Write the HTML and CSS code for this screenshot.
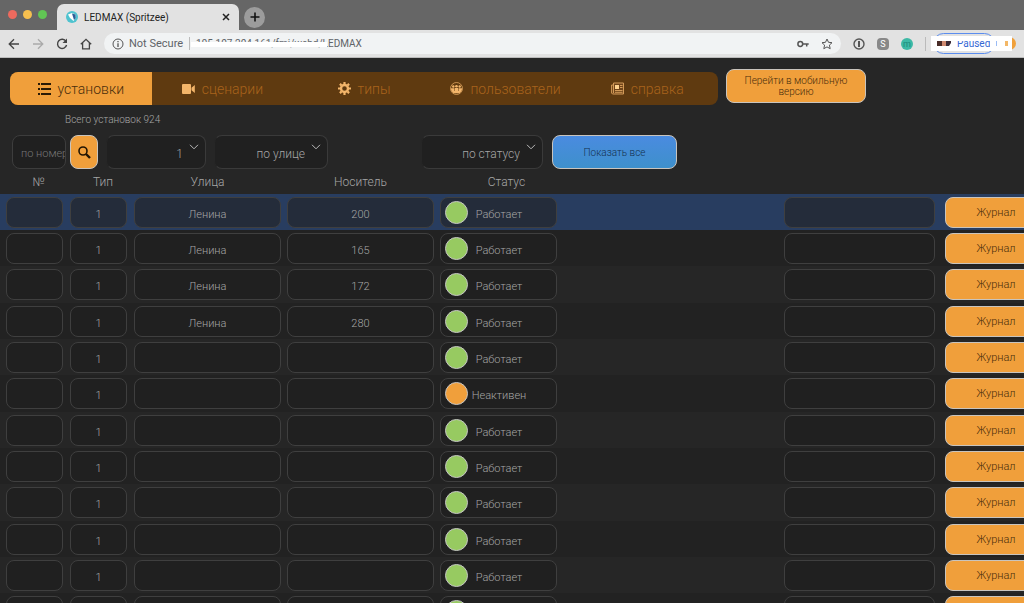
FILE: index.html
```
<!DOCTYPE html>
<html lang="ru">
<head>
    <meta charset="utf-8">
    <title>LEDMAX (Spritzee)</title>
    <link rel="stylesheet" href="styles.css">
</head>
<body>
    <!-- Browser window -->
    <header class="browser">
        <div class="tabs">
            <span class="dot red"></span>
            <span class="dot yellow"></span>
            <span class="dot green"></span>
            <div class="tab">
                <svg width="12" height="12" viewBox="0 0 12 12"><circle cx="6" cy="6" r="6" fill="#4fc3cf"/><path d="M2 3.500L6 2l3.500 1.500.5 3L7.500 10 4 7z" fill="#fff"/><path d="M6 2.500l3.500 1 .3 3.500L8 9z" fill="#2c5f98"/></svg>
                <span class="tab-title">LEDMAX (Spritzee)</span>
                <button class="tab-close" aria-label="Close"><svg width="8" height="8" viewBox="0 0 8 8"><path d="M1 1l6 6M7 1L1 7" stroke="#222" stroke-width="1.5"/></svg></button>
            </div>
            <button class="new-tab" aria-label="New tab"><svg width="10" height="10" viewBox="0 0 10 10"><path d="M5 0.500v9M0.500 5h9" stroke="#111" stroke-width="1.600"/></svg></button>
        </div>
        <div class="toolbar">
            <button class="nav-btn" aria-label="Back"><svg width="12" height="12" viewBox="0 0 12 12" fill="none" stroke="#444" stroke-width="1.300"><path d="M11 6H1.500M6 1.200L1.200 6 6 10.800"/></svg></button>
            <button class="nav-btn" aria-label="Forward"><svg width="12" height="12" viewBox="0 0 12 12" fill="none" stroke="#aaa" stroke-width="1.300"><path d="M1 6h9.500M6 1.200L10.800 6 6 10.800"/></svg></button>
            <button class="nav-btn" aria-label="Reload"><svg width="12" height="12" viewBox="0 0 12 12" fill="none" stroke="#444" stroke-width="1.400"><path d="M10 3.300A4.600 4.600 0 1 0 10.600 7"/><path d="M11 0.500v4.500H6.500z" fill="#444" stroke="none"/></svg></button>
            <button class="nav-btn" aria-label="Home"><svg width="12" height="12" viewBox="0 0 12 12" fill="none" stroke="#444" stroke-width="1.300"><path d="M0.800 6.300L6 1.300l5.200 5M2.600 5v5.800h6.800V5"/></svg></button>
            <div class="address">
                <svg width="12" height="12" viewBox="0 0 12 12" fill="none" stroke="#555"><circle cx="6" cy="6" r="5"/><path d="M6 5.200V9M6 3v1.200" stroke-width="1.300"/></svg>
                <span class="secure">Not Secure</span>
                <span class="url">195.107.204.161/fmi/webd/LEDMAX<span class="url-mask"></span></span>
                <svg class="key" width="12" height="8" viewBox="0 0 12 8" fill="none" stroke="#555" stroke-width="1.500"><circle cx="3.300" cy="4" r="2.400"/><path d="M5.700 4h6M9.700 4v2.600"/></svg>
                <svg width="12" height="12" viewBox="0 0 12 12" fill="none" stroke="#555"><path d="M6 1l1.500 3.300 3.500.4-2.600 2.400.8 3.600L6 8.900l-3.200 1.800.8-3.600L1 4.700l3.500-.4z"/></svg>
            </div>
            <svg width="12" height="12" viewBox="0 0 12 12"><circle cx="6" cy="6" r="5" fill="none" stroke="#555" stroke-width="1.400"/><path d="M6 3v6" stroke="#555" stroke-width="2"/></svg>
            <span class="ext skype">S</span>
            <span class="ext mint">m</span>
            <span class="divider"></span>
            <div class="profile">
                <span class="pill"></span>
                <span class="avatar"></span>
                <div class="profile-mask">
                    <svg width="14" height="5" viewBox="0 0 14 5"><path d="M0 0h5v5H0z" fill="#4a2c28"/><path d="M5 0h4v5H5z" fill="#d08a70"/><path d="M9 0h5v2l-2 3H9z" fill="#3a2a35"/></svg>
                    <span class="paused">Paused</span>
                    <svg width="12" height="5" viewBox="0 0 12 5"><path d="M0 0h1v5H0z" fill="#9bbcf5"/><path d="M9 0h3v5H9z" fill="#f3b766"/></svg>
                </div>
            </div>
        </div>
    </header>

    <main>
        <!-- Menu -->
        <div class="top">
            <nav class="menu">
                <a href="#" class="active"><svg width="13" height="12" viewBox="0 0 13 12" fill="#2a1a05"><path d="M0 0h2v2H0zM3 0h10v2H3zM0 5h2v2H0zM3 5h10v2H3zM0 10h2v2H0zM3 10h10v2H3z"/></svg>установки</a>
                <a href="#"><svg width="13" height="10" viewBox="0 0 13 10" fill="#f3b56a"><rect width="9" height="10" rx="1"/><path d="M9.500 3.800L12.800 1v8L9.500 6.200z"/></svg>сценарии</a>
                <a href="#"><svg width="13" height="13" viewBox="0 0 13 13" fill="none" stroke="#f3b56a"><circle cx="6.500" cy="6.500" r="3.500" stroke-width="2.400"/><path d="M6.500 0v2M6.500 11v2M0 6.500h2M11 6.500h2M1.900 1.900l1.500 1.500M9.600 9.600l1.500 1.500M1.900 11.100l1.500-1.500M9.600 3.400l1.500-1.500" stroke-width="2.200"/></svg>типы</a>
                <a href="#"><svg width="13" height="13" viewBox="0 0 13 13"><circle cx="6.500" cy="6.500" r="6" fill="none" stroke="#f3b56a" stroke-width=".7"/><g fill="#f3b56a"><circle cx="3.300" cy="4.500" r="1.200"/><circle cx="6.500" cy="4.200" r="1.300"/><circle cx="9.700" cy="4.500" r="1.200"/><path d="M.8 6.200h3.700V9h.5V6h3v3h.5V6.200h3.700a6 6 0 0 1-2.700 5H3.500a6 6 0 0 1-2.700-5z"/></g></svg>пользователи</a>
                <a href="#"><svg width="13" height="13" viewBox="0 0 13 13"><path d="M2.500 1h10v11H1.500L.6 11V3h1.900z" fill="#70451a" stroke="#d39a58"/><path d="M2.500 3v8" stroke="#d39a58"/><path d="M4 3h4v4H4z" fill="#ffd28f"/><path d="M9 3.500h2.500M9 5.500h2.500M4 8.500h7.500M4 10.300h7.500" stroke="#d39a58"/></svg>справка</a>
            </nav>
            <button class="btn mobile">Перейти в мобильную версию</button>
        </div>

        <p class="total">Всего установок 924</p>

        <!-- Filters -->
        <form class="filters">
            <input type="text" class="number" placeholder="по номеру" aria-label="по номеру">
            <button type="button" class="btn search" aria-label="Поиск"><svg width="13" height="13" viewBox="0 0 13 13" fill="none" stroke="#221503"><circle cx="5" cy="5" r="4" stroke-width="1.600"/><path d="M8 8l4 4" stroke-width="2.400"/></svg></button>
            <div class="select type"><select aria-label="Тип"><option>1</option></select><svg width="10" height="6" viewBox="0 0 10 6" fill="none" stroke="#bbb"><path d="M1 .8l4 4 4-4"/></svg></div>
            <div class="select street"><select aria-label="Улица"><option>по улице</option></select><svg width="10" height="6" viewBox="0 0 10 6" fill="none" stroke="#bbb"><path d="M1 .8l4 4 4-4"/></svg></div>
            <div class="select status"><select aria-label="Статус"><option>по статусу</option></select><svg width="10" height="6" viewBox="0 0 10 6" fill="none" stroke="#bbb"><path d="M1 .8l4 4 4-4"/></svg></div>
            <button type="button" class="btn show-all">Показать все</button>
        </form>

        <!-- List -->
        <table>
            <colgroup>
                <col class="c-num"><col class="c-type"><col class="c-street"><col class="c-carrier"><col class="c-status"><col><col class="c-note"><col class="c-log">
            </colgroup>
            <thead>
                <tr><th>№</th><th>Тип</th><th>Улица</th><th>Носитель</th><th>Статус</th><th></th><th></th><th></th></tr>
            </thead>
            <tbody id="rows"></tbody>
        </table>
    </main>

    <script>
        const rows = [
            ["Ленина", "200", true],
            ["Ленина", "165", true],
            ["Ленина", "172", true],
            ["Ленина", "280", true],
            ["", "", true],
            ["", "", false],
            ["", "", true],
            ["", "", true],
            ["", "", true],
            ["", "", true],
            ["", "", true],
            ["", "", true]
        ];

        const tbody = document.getElementById("rows");
        for (const [street, carrier, works] of rows) {
            tbody.innerHTML += `
                <tr>
                    <td><div class="field"></div></td>
                    <td><div class="field">1</div></td>
                    <td><div class="field">${street}</div></td>
                    <td><div class="field">${carrier}</div></td>
                    <td><div class="field state"><span class="lamp ${works ? "on" : "off"}"></span><span class="state-text">${works ? "Работает" : "Неактивен"}</span></div></td>
                    <td></td>
                    <td><div class="field"></div></td>
                    <td><button class="btn log">Журнал</button></td>
                </tr>
            `;
        }
    </script>
</body>
</html>
```
FILE: styles.css
```
* {
    box-sizing: border-box;
}

html, body {
    height: 100%;
}

body {
    margin: 0;
    overflow: hidden;
    background-color: #262626;
    color: #a6a6a6;
    font-family: Roboto, "Liberation Sans", sans-serif;
    font-weight: 300;
    font-size: 12px;
}

button, input, select {
    font: inherit;
}

button {
    border: none;
    padding: 0;
    background: none;
    cursor: pointer;
}

svg {
    display: block;
    flex: none;
}

/* browser */
.browser {
    font-weight: 400;
    color: #222;
}

.tabs {
    display: flex;
    align-items: center;
    height: 30px;
    padding-left: 8px;
    background-color: #666;
}

.dot {
    width: 9px;
    height: 9px;
    margin: 0 6px 2px 0;
    border-radius: 50%;
}

.red { background-color: #ed6a5e; }
.yellow { background-color: #f5bf4f; }
.green { background-color: #61c554; }

.tab {
    display: flex;
    align-items: center;
    align-self: flex-end;
    width: 182px;
    height: 26px;
    margin-left: 4px;
    padding: 0 9px;
    border-radius: 7px 7px 0 0;
    background-color: #e2e2e2;
    font-size: 10px;
}

.tab-title {
    flex: 1;
    margin-left: 6px;
}

.new-tab {
    display: flex;
    align-items: center;
    justify-content: center;
    width: 21px;
    height: 21px;
    margin: 4px 0 0 5px;
    border-radius: 50%;
    background-color: #9c9c9c;
}

.toolbar {
    display: flex;
    align-items: center;
    gap: 12px;
    height: 28px;
    padding: 0 8px;
    background-color: #e2e2e2;
    border-bottom: 1px solid #bbb;
}

.address {
    display: flex;
    align-items: center;
    flex: 1;
    height: 21px;
    padding: 0 8px;
    border-radius: 11px;
    background-color: #f1f3f4;
    font-size: 11px;
    color: #5f6368;
}

.secure {
    margin-left: 5px;
    padding-right: 6px;
    border-right: 1px solid #bbb;
}

.url {
    position: relative;
    flex: 1;
    margin-left: 6px;
    font-size: 10px;
}

.url-mask {
    position: absolute;
    top: 4px;
    left: -5px;
    width: 136px;
    height: 5px;
    background-color: #fff;
}

.key {
    margin-right: 12px;
}

.ext {
    width: 12px;
    height: 12px;
    border-radius: 4px;
    color: #fff;
    font-size: 9px;
    line-height: 12px;
    text-align: center;
}

.skype { background-color: #888; }

.mint {
    border-radius: 50%;
    background-color: #3db9a5;
    color: #1d8a7c;
}

.divider {
    width: 1px;
    height: 14px;
    background-color: #bbb;
}

.profile {
    position: relative;
    display: flex;
    align-items: center;
    width: 85px;
    height: 21px;
    margin-left: -7px;
    padding-left: 2px;
}

.pill {
    width: 62px;
    height: 21px;
    border: 1px solid #5b8def;
    border-radius: 11px;
}

.avatar {
    width: 13px;
    height: 13px;
    margin-left: auto;
    border-radius: 50%;
    background-color: #f0a03a;
}

.profile-mask {
    position: absolute;
    top: 3px;
    left: 0;
    display: flex;
    align-items: center;
    width: 81px;
    height: 15px;
    padding-left: 6px;
    background-color: #fff;
}

.paused {
    height: 6px;
    margin: 0 6px;
    overflow: hidden;
    color: #3568d4;
    font-size: 10px;
    line-height: 6px;
}

/* menu */
.top {
    display: flex;
    align-items: flex-start;
    gap: 8px;
    padding: 11px 10px 0;
}

.menu {
    display: grid;
    grid-template-columns: repeat(5, 1fr);
    flex: 0 1 708px;
    margin-top: 3px;
    border-radius: 8px;
    overflow: hidden;
    background-color: #5f3a10;
}

.menu a {
    display: flex;
    align-items: center;
    justify-content: center;
    gap: 7px;
    height: 33px;
    color: #a8631c;
    font-size: 14px;
    text-decoration: none;
}

.menu .active {
    background-color: #f09f3b;
    color: #4a2e0c;
}

.btn {
    border: 1px solid #c9c4bd;
    border-radius: 8px;
    background-color: #f09f3b;
    color: #4a2e0c;
    font-size: 11px;
}

.mobile {
    width: 140px;
    height: 34px;
    padding: 0 14px;
    font-size: 10px;
    line-height: 11px;
}

.total {
    margin: 8px 0 0 65px;
    font-size: 10px;
    line-height: 14px;
}

/* filters */
.filters {
    display: flex;
    margin: 8px 0 0 12px;
}

.number {
    width: 54px;
    height: 34px;
    padding: 3px 0 0 8px;
    border: 1px solid #3d3d3d;
    border-radius: 8px;
    background-color: #202020;
    color: #a6a6a6;
    font-size: 11px;
}

.number::placeholder {
    color: #777;
}

.search {
    display: flex;
    align-items: center;
    justify-content: center;
    width: 28px;
    height: 34px;
    margin-left: 4px;
}

.select {
    position: relative;
    height: 34px;
    margin-left: 8px;
}

.select select {
    width: 100%;
    height: 34px;
    padding: 3px 22px 0 0;
    appearance: none;
    border: 1px solid #3a3a3a;
    border-left-color: #262626;
    border-radius: 8px;
    background-color: #202020;
    color: #a6a6a6;
    font-size: 12px;
    text-align: right;
    text-align-last: right;
}

.select svg {
    position: absolute;
    top: 9px;
    right: 7px;
}

.type { width: 100px; }
.street { width: 114px; }

.status {
    width: 122px;
    margin-left: 93px;
}

.show-all {
    width: 125px;
    height: 34px;
    margin-left: 9px;
    background: linear-gradient(#4a8be0, #3e90cb);
    color: #14314f;
    font-size: 10px;
}

/* list */
table {
    width: 100%;
    min-width: 1050px;
    table-layout: fixed;
    border-collapse: collapse;
}

.c-num { width: 67px; }
.c-type { width: 64px; }
.c-street { width: 153px; }
.c-carrier { width: 153px; }
.c-status { width: 123px; }
.c-note { width: 158px; }
.c-log { width: 111px; }

th {
    height: 25px;
    padding: 0;
    font-size: 12px;
    font-weight: 300;
}

th:first-child {
    padding-left: 10px;
}

th:nth-child(2) {
    padding-left: 8px;
}

th:nth-child(5) {
    padding-left: 16px;
}

td {
    height: 36px;
    padding: 0 3px;
}

td:first-child {
    padding: 0 4px 0 6px;
}

td:nth-child(2) {
    padding-right: 4px;
}

td:last-child {
    padding-left: 6px;
}

td:nth-child(7) {
    padding-right: 4px;
}

tbody tr:nth-child(even) {
    background-color: #222;
}

tbody tr:nth-child(3n) td {
    height: 37px;
}

tbody tr:first-child {
    background-color: #283d60;
}

.field {
    display: flex;
    align-items: center;
    justify-content: center;
    height: 31px;
    padding-top: 4px;
    border: 1px solid #3f3f3f;
    border-radius: 8px;
    background-color: #202020;
    font-size: 11px;
}

tr:first-child .field {
    background-color: #242c3a;
}

.state {
    justify-content: flex-start;
    padding: 0 0 0 4px;
}

.lamp {
    width: 23px;
    height: 23px;
    border: 1px solid #c4c4c4;
    border-radius: 50%;
}

.on { background-color: #97ca61; }
.off { background-color: #f09f3b; }

.state-text {
    width: 62px;
    padding-top: 4px;
    text-align: center;
}

.log {
    display: block;
    width: 100%;
    height: 31px;
}
```
